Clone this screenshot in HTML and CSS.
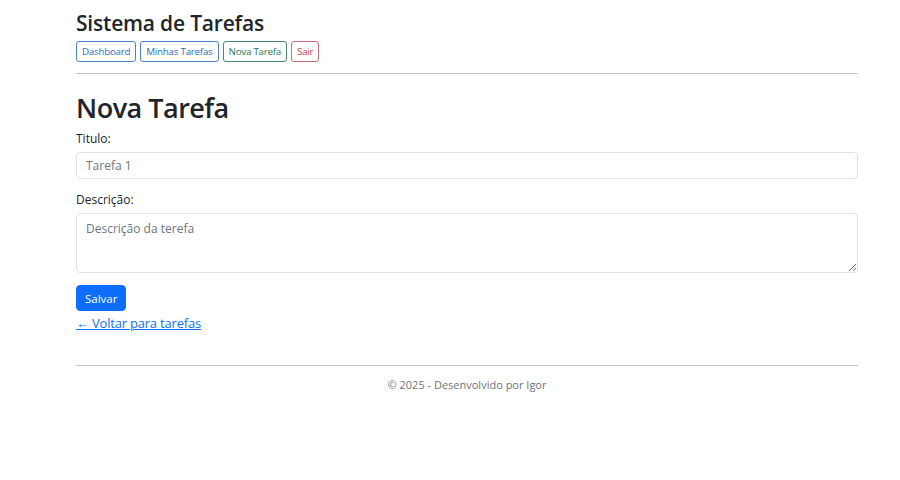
FILE: index.html
```html
<!DOCTYPE html>
<html lang="pt-BR">
<head>
<meta charset="utf-8">
<title>Nova Tarefa</title>
<link rel="stylesheet" href="styles.css">
</head>
<body>
<div class="container">
  <header class="site-header">
    <h2 class="brand">Sistema de Tarefas</h2>
    <nav class="nav">
      <a class="btn btn-outline-primary" href="#">Dashboard</a>
      <a class="btn btn-outline-primary" href="#">Minhas Tarefas</a>
      <a class="btn btn-outline-success" href="#">Nova Tarefa</a>
      <a class="btn btn-outline-danger" href="#">Sair</a>
    </nav>
  </header>
  <hr class="divider">
  <main>
    <h1 class="page-title">Nova Tarefa</h1>
    <form class="form">
      <label class="label" for="titulo">Titulo:</label>
      <input class="control" id="titulo" type="text" placeholder="Tarefa 1">
      <label class="label" for="descricao">Descrição:</label>
      <textarea class="control textarea" id="descricao" placeholder="Descrição da terefa"></textarea>
      <button class="btn-primary" type="button">Salvar</button>
    </form>
    <a class="back" href="#">← Voltar para tarefas</a>
  </main>
  <footer class="footer">
    <hr class="divider footer-line">
    <p class="footer-text">© 2025 - Desenvolvido por Igor</p>
  </footer>
</div>
</body>
</html>
```
FILE: styles.css
```css
* { box-sizing: border-box; }
body {
  margin: 0;
  font-family: "Open Sans", "Noto Sans", sans-serif;
  color: #212529;
  background: #fff;
}
.container {
  width: 782px;
  margin-left: 76px;
}
.site-header {
  padding-top: 8px;
}
.brand {
  margin: 0;
  font-size: 21px;
  font-weight: 600;
  line-height: 30px;
  letter-spacing: -0.2px;
}
.nav {
  display: flex;
  gap: 4px;
  margin-top: 3px;
}
.btn {
  display: inline-block;
  height: 21px;
  line-height: 19px;
  padding: 0 5px;
  font-size: 9.8px;
  letter-spacing: -0.25px;
  border: 1px solid;
  border-radius: 3px;
  text-decoration: none;
}
.btn-outline-primary { color: #2f6fc4; border-color: #4a82cf; }
.btn-outline-success { color: #2e7a55; border-color: #4a8a68; }
.btn-outline-danger { color: #c9424f; border-color: #cf6a74; }
.divider {
  margin: 11px 0 0;
  border: 0;
  border-top: 1px solid #c8c9ca;
}
.page-title {
  margin: 16px 0 0;
  font-size: 27px;
  font-weight: 600;
  line-height: 36px;
  letter-spacing: -0.5px;
}
.form {
  display: flex;
  flex-direction: column;
  align-items: flex-start;
}
.label {
  display: block;
  margin-top: 4px;
  font-size: 12px;
  line-height: 18px;
}
.control {
  display: block;
  width: 100%;
  margin-top: 4px;
  height: 27px;
  padding: 0 9px;
  font-family: inherit;
  font-size: 12px;
  color: #212529;
  border: 1px solid #dee2e6;
  border-radius: 4px;
  margin-bottom: 8px;
}
.control::placeholder { color: #6c757d; }
.textarea {
  height: 60px;
  padding: 6px 9px;
  resize: vertical;
  margin-bottom: 12px;
}
.btn-primary {
  height: 26px;
  padding: 0 8px;
  font-family: inherit;
  font-size: 11.5px;
  color: #fff;
  background: #0d6efd;
  border: 1px solid #0d6efd;
  border-radius: 4px;
}
.back {
  display: inline-block;
  margin-top: 1px;
  font-size: 13px;
  line-height: 20px;
  letter-spacing: -0.2px;
  color: #0d6efd;
}
.footer-line {
  margin-top: 32px;
}
.footer-text {
  margin: 11px 0 0;
  text-align: center;
  font-size: 11px;
  color: #6c757d;
}
```
